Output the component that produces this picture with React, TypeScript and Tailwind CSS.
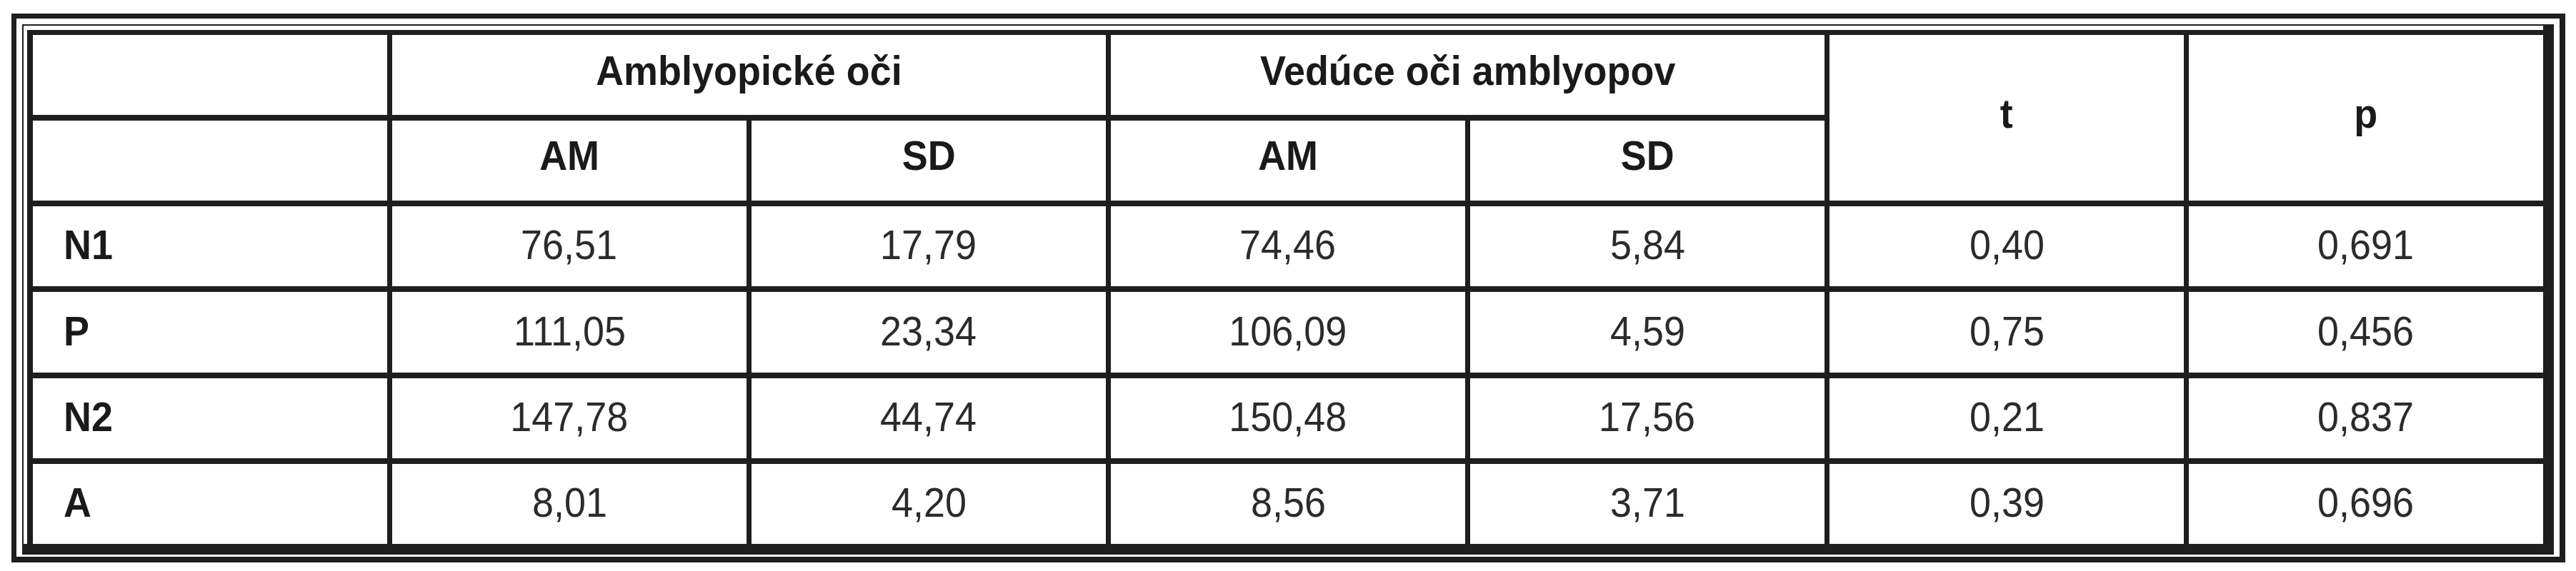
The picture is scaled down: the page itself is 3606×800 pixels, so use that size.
import React from "react";

const rows = [
  { label: "N1", values: ["76,51", "17,79", "74,46", "5,84", "0,40", "0,691"] },
  { label: "P", values: ["111,05", "23,34", "106,09", "4,59", "0,75", "0,456"] },
  { label: "N2", values: ["147,78", "44,74", "150,48", "17,56", "0,21", "0,837"] },
  { label: "A", values: ["8,01", "4,20", "8,56", "3,71", "0,39", "0,696"] },
];

// the print face is a touch narrower than Arial, so squeeze it a little
const Txt = ({ children, left = false }: { children: React.ReactNode; left?: boolean }) => (
  <span className={`inline-block scale-x-[0.93] ${left ? "origin-left" : "origin-center"}`}>
    {children}
  </span>
);

const HeadCell = ({
  children,
  className = "",
}: {
  children?: React.ReactNode;
  className?: string;
}) => (
  <div
    className={`flex items-center justify-center bg-white font-bold text-[#1a1a1a] ${className}`}
  >
    {children && <Txt>{children}</Txt>}
  </div>
);

const App = () => {
  return (
    <div className="h-[800px] w-[3606px] bg-white pl-[16px] pt-[19px] font-['Liberation_Sans',Arial,sans-serif] text-[58px] leading-none">
      {/* outer frame */}
      <div className="h-[769px] w-[3575px] border-b-[8px] border-l-[7px] border-r-[8px] border-t-[7px] border-[#1e1e1e] pb-[3px] pl-[8px] pr-[8px] pt-[8px]">
        {/* thin line top/left, heavy band bottom/right */}
        <div className="h-full w-full border-b-[15px] border-l-[2px] border-r-[15px] border-t-[2px] border-[#1e1e1e] pl-[5px] pt-[6px]">
          <div className="grid h-full w-full grid-cols-7 grid-rows-6 gap-x-[7px] gap-y-[8px] border-l-[8px] border-t-[7px] border-[#1e1e1e] bg-[#1e1e1e]">
            <HeadCell />
            <HeadCell className="col-span-2 pb-[12px]">Amblyopické oči</HeadCell>
            <HeadCell className="col-span-2 pb-[12px]">Vedúce oči amblyopov</HeadCell>
            <HeadCell className="row-span-2 pb-[12px]">t</HeadCell>
            <HeadCell className="row-span-2 pb-[12px]">p</HeadCell>

            <HeadCell />
            <HeadCell className="pb-[14px]">AM</HeadCell>
            <HeadCell className="pb-[14px]">SD</HeadCell>
            <HeadCell className="pb-[14px]">AM</HeadCell>
            <HeadCell className="pb-[14px]">SD</HeadCell>

            {rows.map((row) => (
              <React.Fragment key={row.label}>
                <div className="flex items-center bg-white pb-[4px] pl-[43px] font-bold text-[#1a1a1a]">
                  <Txt left>{row.label}</Txt>
                </div>
                {row.values.map((v, i) => (
                  <div
                    key={i}
                    className="flex items-center justify-center bg-white pb-[4px] text-[#2b2b2b]"
                  >
                    <Txt>{v}</Txt>
                  </div>
                ))}
              </React.Fragment>
            ))}
          </div>
        </div>
      </div>
    </div>
  );
};

export default App;
